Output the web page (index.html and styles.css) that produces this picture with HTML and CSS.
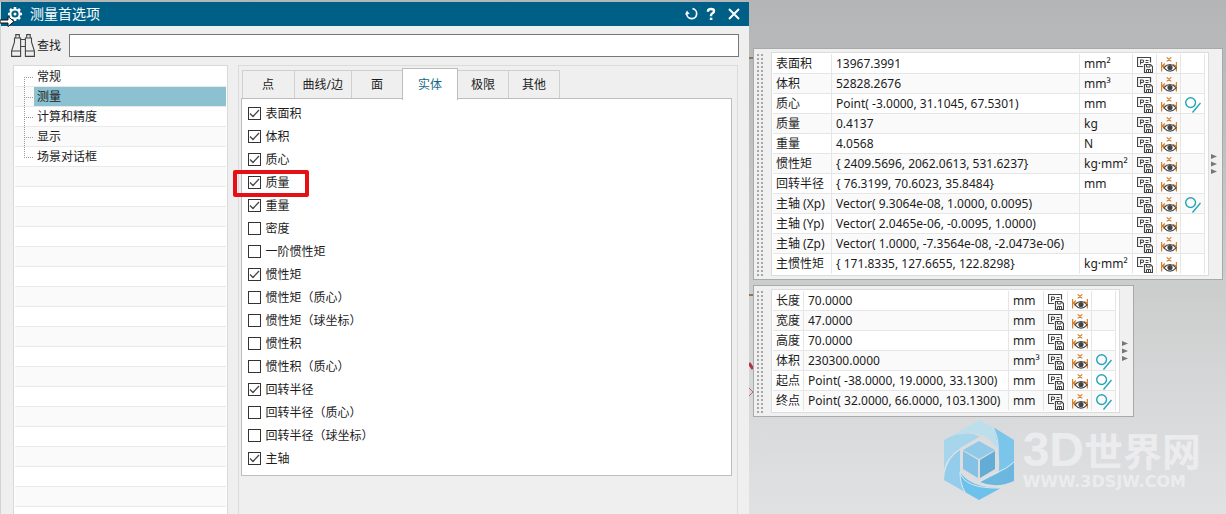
FILE: index.html
```
<!DOCTYPE html>
<html lang="zh-CN">
<head>
<meta charset="utf-8">
<title>测量首选项</title>
<link rel="stylesheet" href="styles.css">
</head>
<body>
<svg class="sprite" aria-hidden="true">
  <symbol id="i-save" viewBox="0 0 16 16">
    <g fill="none" stroke="#444">
      <path d="M6 9.500H.5V.5h13v5" stroke-width="1.200"/>
      <path d="M3.500 7.500V3h2q1.200 0 1.200 1.200T5.500 5.500H3.500" stroke-width="1.100"/>
      <path d="M8.500 3.500h3M8.500 5.500h3"/>
      <path fill="#fff" d="M7.500 7.500h6l2 2v6h-8z" stroke-width="1.200"/>
      <path d="M9.500 7.500v2.500h3.500V7.500M9.500 15.500v-3h4v3"/>
      <path d="M11.500 13v2"/>
    </g>
  </symbol>
  <symbol id="i-eye" viewBox="0 0 16 16">
    <g fill="none" stroke="#d9822b" stroke-width="1.200">
      <path d="M5.700.4l4.600 4M10.300.4L5.700 4.400M.6 5v9.500M15.400 5v9.500M1 9h4.500M4 6.500L1.200 9l2.500 2M12 7.500l3 1.500"/>
    </g>
    <path d="M2.800 10.800Q9 4.200 15.200 10.800Q9 17.400 2.800 10.800z" fill="#fff" stroke="#444" stroke-width="1.200"/>
    <circle cx="9" cy="10.500" r="2.600" fill="#444"/>
  </symbol>
  <symbol id="i-link" viewBox="0 0 16 16">
    <g fill="none" stroke="#25a5b9" stroke-width="1.400">
      <circle cx="5.600" cy="5.600" r="4.900"/>
      <path d="M15.500 6L7.500 15.500"/>
    </g>
  </symbol>
  <symbol id="i-arrows" viewBox="0 0 8 20">
    <g fill="#777"><path d="M1 0l6 2.500L1 5z"/><path d="M1 7.500L7 10l-6 2.500z"/><path d="M1 15l6 2.500L1 20z"/></g>
  </symbol>
</svg>

<div class="workspace">
  <section class="dialog" aria-labelledby="dialog-title">
    <header class="titlebar">
      <svg class="gear" viewBox="0 0 24 20" aria-hidden="true">
        <g transform="translate(15 9)">
          <circle r="4.600" fill="none" stroke="#fff" stroke-width="2"/>
          <path d="M0-7v2M0 5v2M-7 0h2M5 0h2M-5-5l1.500 1.500M5-5L3.500-3.500M-5 5l1.500-1.500M5 5L3.500 3.500" stroke="#fff" stroke-width="2.600"/>
          <circle r="1.500" fill="#fff"/>
        </g>
        <path d="M0 15h8v-3.500l6 5-6 5V18H0z" fill="#fff" stroke="#111"/>
      </svg>
      <h1 id="dialog-title">测量首选项</h1>
      <button class="title-btn" type="button" aria-label="重置"><svg viewBox="0 0 14 14"><path d="M7.500 1.700a5 5 0 1 1-5.800 4.500" fill="none" stroke="#fff" stroke-width="1.700"/><path d="M0 7.500l2-4 2.700 3.500z" fill="#fff"/></svg></button>
      <button class="title-btn" type="button" aria-label="帮助"><svg viewBox="0 0 14 14"><path d="M4 4.800V4q0-2 3-2t3 2q0 1.500-1.500 2.300T7 8.500v.7" fill="none" stroke="#fff" stroke-width="2.400"/><path d="M5.800 10.700h2.600V13H5.800z" fill="#fff"/></svg></button>
      <button class="title-btn close" type="button" aria-label="关闭"><svg viewBox="0 0 14 14"><path d="M2 2l10 10M12 2L2 12" stroke="#fff" stroke-width="2"/></svg></button>
    </header>

    <div class="search">
      <svg viewBox="0 0 24 23" aria-hidden="true"><g fill="none" stroke="#444" stroke-width="1.100">
        <path d="M3.500 4v4L.6 17v5.400h9V4zM4.800 4V.6h3.500V4M.6 17h9"/>
        <path d="M20.500 4v4l2.900 9v5.400h-9V4zM19.200 4V.6h-3.500V4M23.400 17h-9M9.600 5.500h4.800M9.600 12.500h4.800"/>
      </g></svg>
      <label for="find">查找</label>
      <input id="find" type="text">
    </div>

    <div class="dialog-body">
      <ul class="tree">
        <li>常规</li>
        <li class="selected">测量</li>
        <li>计算和精度</li>
        <li>显示</li>
        <li>场景对话框</li>
      </ul>
      <div class="group">
        <div class="tabs" role="tablist">
          <button type="button" role="tab">点</button>
          <button type="button" role="tab">曲线/边</button>
          <button type="button" role="tab">面</button>
          <button type="button" role="tab" class="active" aria-selected="true">实体</button>
          <button type="button" role="tab">极限</button>
          <button type="button" role="tab">其他</button>
        </div>
        <div class="options" role="tabpanel">
          <label><input type="checkbox" checked>表面积</label>
          <label><input type="checkbox" checked>体积</label>
          <label><input type="checkbox" checked>质心</label>
          <label class="marked"><input type="checkbox" checked>质量</label>
          <label><input type="checkbox" checked>重量</label>
          <label><input type="checkbox">密度</label>
          <label><input type="checkbox">一阶惯性矩</label>
          <label><input type="checkbox" checked>惯性矩</label>
          <label><input type="checkbox">惯性矩（质心）</label>
          <label><input type="checkbox">惯性矩（球坐标）</label>
          <label><input type="checkbox">惯性积</label>
          <label><input type="checkbox">惯性积（质心）</label>
          <label><input type="checkbox" checked>回转半径</label>
          <label><input type="checkbox">回转半径（质心）</label>
          <label><input type="checkbox">回转半径（球坐标）</label>
          <label><input type="checkbox" checked>主轴</label>
        </div>
      </div>
    </div>
  </section>

  <main class="results">
    <svg class="model-edges" viewBox="0 0 4 400" aria-hidden="true">
      <path d="M0 58h4M0 295h4" stroke="#957355" stroke-width="2"/>
      <path d="M0 363l4 6" stroke="#b03040" stroke-width="3"/>
      <path d="M0 388l4 4-4 4" fill="none" stroke="#c46068"/>
    </svg>

    <section class="panel">
      <div class="grip"></div>
      <div class="sheet">
        <table class="body-table">
          <colgroup><col class="c-name"><col class="c-value"><col class="c-unit"><col class="c-icon"><col class="c-icon"><col class="c-icon"></colgroup>
          <tbody id="body-rows"></tbody>
        </table>
      </div>
      <svg class="arrows" aria-hidden="true"><use href="#i-arrows"/></svg>
    </section>

    <section class="panel">
      <div class="grip"></div>
      <div class="sheet">
        <table class="box-table">
          <colgroup><col class="c-name"><col class="c-value"><col class="c-unit"><col class="c-icon"><col class="c-icon"><col class="c-icon"></colgroup>
          <tbody id="box-rows"></tbody>
        </table>
      </div>
      <svg class="arrows" aria-hidden="true"><use href="#i-arrows"/></svg>
    </section>

    <div class="brand">
      <svg viewBox="0 0 72 82" aria-hidden="true">
        <path d="M1 21L36 1l14 7q7 10 5 25Q49 17 31 14 16 12 1 21z" fill="#bddfec"/>
        <path d="M50 8l21 13v30q-5 8-16 11 4-30-5-54z" fill="#7cc5ea"/>
        <path d="M71 44v18q-18 8-34 1l18-9q10-4 16-10z" fill="#6bb7e0"/>
        <path d="M17 53q10 15 38 16h3L36 81 22 73q-5-8-5-20z" fill="#6dc1ea"/>
        <path d="M17 31v22q0 11 5 20L1 61q1-20 16-30z" fill="#94cceb"/>
        <path d="M1 21q13-8 30-6l6 3-20 12Q4 37 1 53z" fill="#a6d5ec"/>
        <path d="M36 18l19 11v23L36 64 17 53V29z" fill="#dcdddf"/>
        <path d="M36 22l16 9-16 9-16-9z" fill="#91c9e8"/>
        <path d="M20 32l15 9v18l-15-9z" fill="#84c2e5"/>
        <path d="M52 32v18l-15 9V41z" fill="#63acd6"/>
        <path d="M1 53q2-14 16-23M50 8q6 11 5 24M71 43q-8 7-16 10T37 62M17 53q4 17 41 16M22 73q-5-8-5-20" fill="none" stroke="#d9e6ec"/>
      </svg>
      <div class="brand-text">
        <div class="brand-name"><span>3D</span>世界网</div>
        <div class="brand-url">WWW.3DSJW.COM</div>
      </div>
    </div>
  </main>
</div>
<script src="rows.js"></script>
</body>
</html>
```
FILE: styles.css
```
* { box-sizing: border-box; }

body {
  margin: 0;
  font: 12px/20px "Noto Sans", "Noto Sans CJK SC", sans-serif;
  color: #1c1c1c;
}

button, input { font: inherit; color: inherit; }
.sprite { position: absolute; width: 0; height: 0; }

.workspace {
  display: grid;
  grid-template-columns: minmax(0, 1fr) auto;
  height: 100vh;
  min-height: 500px;
  overflow: hidden;
  background: linear-gradient(#b3b5b7, #bbbdbd 20%, #cdcfcf 58%, #d9dadb 82%, #e0e1e2);
}

/* Preferences dialog */
.dialog {
  display: flex;
  flex-direction: column;
  min-height: 0;
  margin-top: 2px;
  border-left: 1px solid #d2d3d4;
  background: #efefef;
}

.titlebar {
  display: flex;
  flex: none;
  align-items: center;
  height: 24px;
  padding-right: 8px;
  background: #005f87;
  color: #fff;
}
.gear { width: 24px; height: 20px; margin: 1px 6px 0 -1px; overflow: visible; }
.titlebar h1 { flex: 1; margin: 0; font-size: 14px; font-weight: 400; }
.title-btn { display: flex; padding: 0; margin-left: 5px; border: 0; background: none; }
.title-btn.close { margin-left: 9px; }
.title-btn svg { width: 14px; height: 14px; }

.search {
  display: flex;
  flex: none;
  align-items: center;
  padding: 8px 10px;
}
.search svg { width: 24px; height: 23px; margin-right: 2px; }
.search label { margin-right: 8px; }
.search input {
  flex: 1;
  min-width: 0;
  height: 23px;
  border: 1px solid #777;
  background: #fff;
}

.dialog-body {
  display: grid;
  grid-template-columns: minmax(0, 3fr) minmax(0, 7fr);
  gap: 10px;
  flex: 1;
  min-height: 0;
  padding: 0 11px 0 12px;
  overflow: hidden;
}
.tree {
  margin: 0;
  padding: 1px;
  border: 1px solid #d9d9d9;
  border-bottom: 0;
  list-style: none;
  background: repeating-linear-gradient(#fff 0 19px, #e9e9e9 19px 20px, #fafafa 20px 39px, #e9e9e9 39px 40px) content-box, #fff;
}
.tree li {
  display: flex;
  align-items: center;
  height: 20px;
  padding-left: 9px;
}
.tree li::before {
  content: "";
  width: 9px;
  height: 20px;
  margin-right: 4px;
  background:
    repeating-linear-gradient(#999 0 1px, transparent 1px 2px) 0 0 / 1px 100% no-repeat,
    repeating-linear-gradient(90deg, #999 0 1px, transparent 1px 2px) 0 10px / 100% 1px no-repeat;
}
.tree li:first-child::before { height: 10px; margin-top: 10px; background-position: 0 0, 0 0; }
.tree li:last-child::before { height: 11px; margin-bottom: 9px; }
.tree .selected {
  background: linear-gradient(#8bc1d0, #8bc1d0) 19px 0 / 100% 19px no-repeat;
}

.group {
  min-width: 0;
  padding: 2px 5px 0 2px;
  border: 1px solid #dcdcdc;
  border-bottom: 0;
}
.tabs { display: flex; align-items: flex-end; padding-left: 1px; }
.tabs button {
  height: 28px;
  min-width: 51px;
  padding: 0 8px;
  border: 1px solid #cfcfcf;
  border-width: 1px 1px 0 0;
  background: #efefef;
}
.tabs button:first-child { min-width: 53px; border-left-width: 1px; }
.tabs .active {
  min-width: 56px;
  height: 32px;
  margin: 0 0 -2px -1px;
  border-color: #bdbdbd;
  border-left-width: 1px;
  background: #fff;
  color: #166a85;
  z-index: 1;
}
.options {
  display: flex;
  flex-direction: column;
  padding: 3px 6px 5px;
  border: 1px solid #bdbdbd;
  background: #fff;
}
.options label {
  display: flex;
  align-items: center;
  align-self: flex-start;
  gap: 5px;
  height: 23px;
}
.options input {
  appearance: none;
  width: 13px;
  height: 13px;
  margin: 0;
  border: 1px solid #333;
  background: #fff;
}
.options input:checked {
  background: url("data:image/svg+xml,%3Csvg xmlns='http://www.w3.org/2000/svg' viewBox='0 0 11 11'%3E%3Cpath d='M1 5.500l3 3L10 2' fill='none' stroke='%23444' stroke-width='1.300'/%3E%3C/svg%3E") center / 11px 11px no-repeat #fff;
}
.marked { position: relative; }
.marked::after {
  content: "";
  position: absolute;
  inset: -1px -19px -3px -15px;
  border: 4px solid #e51015;
  border-radius: 2px;
}

/* Measurement results */
.results {
  position: relative;
  display: flex;
  flex-direction: column;
  align-items: flex-start;
  gap: 5px;
  padding: 48px 3px 0 4px;
}
.model-edges { position: absolute; top: 0; left: 0; width: 4px; height: 400px; }

.panel {
  display: flex;
  padding: 3px 4px 3px 3px;
  border: 1px solid #a8aaaa;
  background: #f0f0f0;
}
.grip {
  width: 7px;
  margin-right: 7px;
  background: conic-gradient(#a6a6a6 25%, transparent 0) -2px 2px / 4px 4px;
}
.sheet { padding: 1px 3px 1px 1px; border: 1px solid #dcdcdc; background: #fff; }
.arrows { align-self: center; width: 8px; height: 20px; margin-left: 1px; }

table { border-collapse: separate; border-spacing: 0; table-layout: fixed; }
.body-table { width: 432px; }
.box-table { width: 343px; }
.body-table .c-name { width: 59px; }
.body-table .c-value { width: 248px; }
.body-table .c-unit { width: 53px; }
.box-table .c-name { width: 31px; }
.box-table .c-value { width: 205px; }
.box-table .c-unit { width: 35px; }
.c-icon { width: 24px; }
th, td {
  height: 20px;
  padding: 0 0 0 4px;
  border-right: 1px solid #e6e6e6;
  border-bottom: 1px solid #e6e6e6;
  font-weight: 400;
  line-height: 19px;
  text-align: left;
  white-space: nowrap;
}
th { padding-left: 3px; }
tr:nth-child(even) { background: #fafafa; }
tr:last-child > * { border-bottom-color: transparent; }
td button {
  display: block;
  width: 16px;
  height: 16px;
  margin-top: 2px;
  padding: 0;
  border: 0;
  background: none;
}
td button svg { display: block; width: 16px; height: 16px; }

/* Site mark */
.brand {
  display: flex;
  align-self: flex-end;
  gap: 8px;
  margin: -3px 22px 0 0;
}
.brand > svg { width: 72px; height: 82px; }
.brand-text { padding-top: 11px; color: #ececee; white-space: nowrap; }
.brand-name { font: 700 39px/40px "Liberation Sans", "Noto Sans CJK SC", sans-serif; }
.brand-name span { font-size: 48px; }
.brand-url { font: 700 16px/18px "DejaVu Sans", sans-serif; }
```
FILE: rows.js
```
const bodyRows = [
  ["表面积", "13967.3991", "mm²"],
  ["体积", "52828.2676", "mm³"],
  ["质心", "Point( -3.0000, 31.1045, 67.5301)", "mm", true],
  ["质量", "0.4137", "kg"],
  ["重量", "4.0568", "N"],
  ["惯性矩", "{ 2409.5696, 2062.0613, 531.6237}", "kg·mm²"],
  ["回转半径", "{ 76.3199, 70.6023, 35.8484}", "mm"],
  ["主轴 (Xp)", "Vector( 9.3064e-08, 1.0000, 0.0095)", "", true],
  ["主轴 (Yp)", "Vector( 2.0465e-06, -0.0095, 1.0000)", ""],
  ["主轴 (Zp)", "Vector( 1.0000, -7.3564e-08, -2.0473e-06)", ""],
  ["主惯性矩", "{ 171.8335, 127.6655, 122.8298}", "kg·mm²"]
];
const boxRows = [
  ["长度", "70.0000", "mm"],
  ["宽度", "47.0000", "mm"],
  ["高度", "70.0000", "mm"],
  ["体积", "230300.0000", "mm³", true],
  ["起点", "Point( -38.0000, 19.0000, 33.1300)", "mm", true],
  ["终点", "Point( 32.0000, 66.0000, 103.1300)", "mm", true]
];

const iconButton = (icon, label) =>
  `<button type="button" aria-label="${label}"><svg><use href="#${icon}"/></svg></button>`;

function fill(id, rows) {
  document.getElementById(id).innerHTML = rows.map(([name, value, unit, link]) =>
    `<tr><th scope="row">${name}</th><td>${value}</td><td>${unit}</td>` +
    `<td>${iconButton("i-save", "保存")}</td><td>${iconButton("i-eye", "显示")}</td>` +
    `<td>${link ? iconButton("i-link", "关联") : ""}</td></tr>`).join("");
}

fill("body-rows", bodyRows);
fill("box-rows", boxRows);
```
